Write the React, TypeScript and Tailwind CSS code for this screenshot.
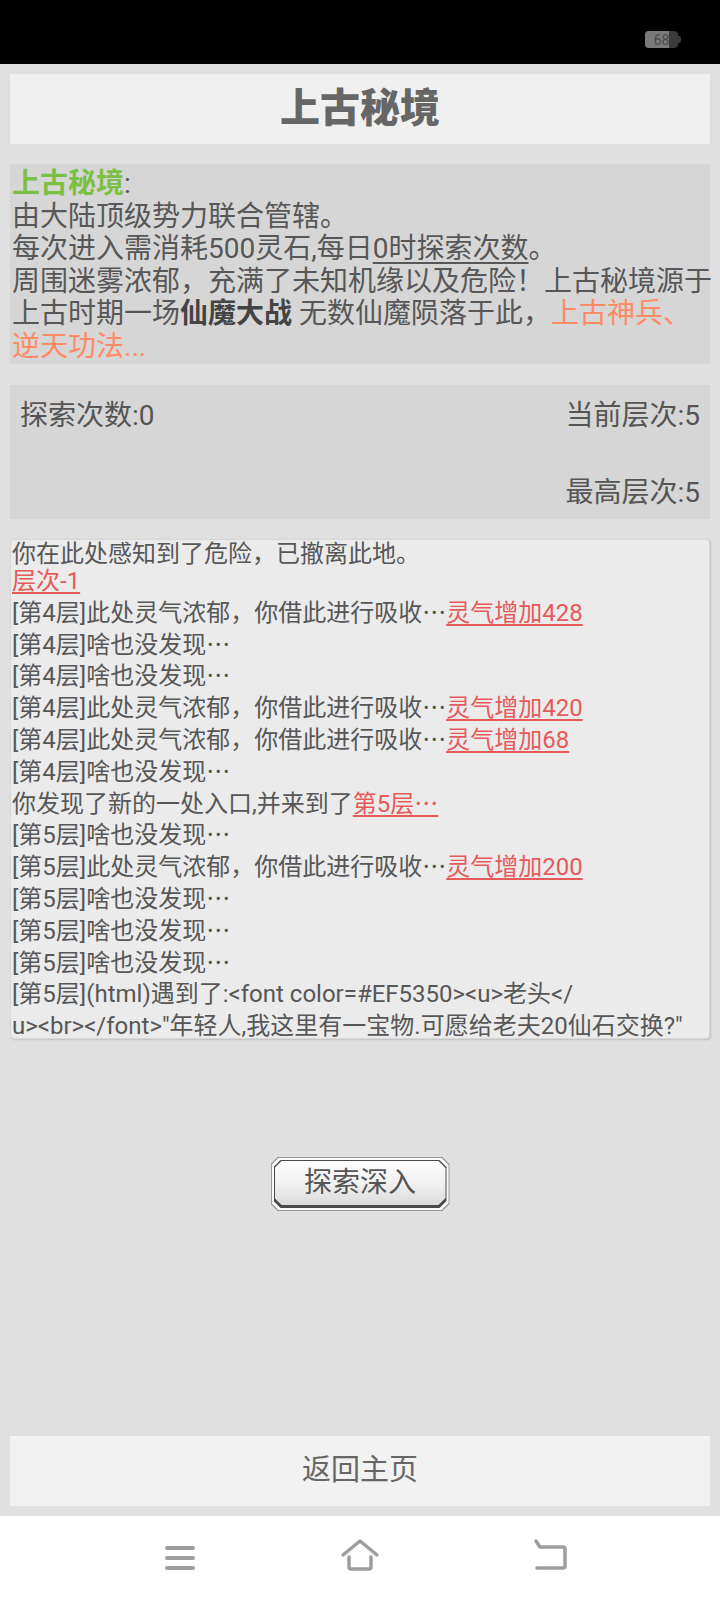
import React from "react";

const FONT = "font-['Roboto','Noto_Sans_CJK_SC',sans-serif]";

type Part = { t: string; red?: boolean };

const logLines: Part[][] = [
  [{ t: "层次-1", red: true }],
  [{ t: "[第4层]此处灵气浓郁，你借此进行吸收…" }, { t: "灵气增加428", red: true }],
  [{ t: "[第4层]啥也没发现…" }],
  [{ t: "[第4层]啥也没发现…" }],
  [{ t: "[第4层]此处灵气浓郁，你借此进行吸收…" }, { t: "灵气增加420", red: true }],
  [{ t: "[第4层]此处灵气浓郁，你借此进行吸收…" }, { t: "灵气增加68", red: true }],
  [{ t: "[第4层]啥也没发现…" }],
  [{ t: "你发现了新的一处入口,并来到了" }, { t: "第5层…", red: true }],
  [{ t: "[第5层]啥也没发现…" }],
  [{ t: "[第5层]此处灵气浓郁，你借此进行吸收…" }, { t: "灵气增加200", red: true }],
  [{ t: "[第5层]啥也没发现…" }],
  [{ t: "[第5层]啥也没发现…" }],
  [{ t: "[第5层]啥也没发现…" }],
  [{ t: "[第5层](html)遇到了:<font color=#EF5350><u>老头</" }],
  [{ t: 'u><br></font>"年轻人,我这里有一宝物.可愿给老夫20仙石交换?"' }],
];

// the ellipsis on the device comes from the CJK font, full width
function withEllipsis(text: string) {
  const bits = text.split("…");
  return bits.map((b, i) => (
    <React.Fragment key={i}>
      {b}
      {i < bits.length - 1 && (
        <span className="font-['Noto_Sans_CJK_SC',sans-serif] leading-none">…</span>
      )}
    </React.Fragment>
  ));
}

function Battery() {
  return (
    <div className="flex items-center">
      <div className="relative w-[33px] h-[17px] rounded-[4px] bg-[#3a3a3a] overflow-hidden">
        <div className="absolute left-0 top-0 h-full w-[24px] bg-[#7a7a7a]" />
        <span className="absolute inset-0 flex items-center justify-center text-[14px] leading-none text-[#4a4a4a] font-['Roboto',sans-serif]">
          68
        </span>
      </div>
      <div className="w-[3px] h-[7px] rounded-r-[2px] bg-[#3a3a3a]" />
    </div>
  );
}

function ExploreButton() {
  const cut = "[clip-path:polygon(7px_0,calc(100%-7px)_0,100%_7px,100%_calc(100%-7px),calc(100%-7px)_100%,7px_100%,0_calc(100%-7px),0_7px)]";
  return (
    <div className={`w-[179px] h-[54px] bg-[#9a9a9a] p-[1px] ${cut}`}>
      <div className={`w-full h-full bg-[#fafafa] p-[2px] ${cut}`}>
        <div className={`w-full h-full bg-[#4a4a4a] pt-[1px] px-[1px] pb-[3px] ${cut}`}>
          <div
            className={`w-full h-full flex items-center justify-center bg-gradient-to-b from-[#fdfdfd] via-[#f1f1f1] to-[#dcdcdc] text-[28px] text-[#555] ${cut}`}
          >
            探索深入
          </div>
        </div>
      </div>
    </div>
  );
}

export default function App() {
  return (
    <div className={`w-[720px] h-[1600px] flex flex-col bg-[#e0e0e0] ${FONT}`}>
      {/* status bar */}
      <div className="h-[64px] bg-black flex items-start justify-end pt-[31px] pr-[39px]">
        <Battery />
      </div>

      <div className="flex-1 flex flex-col px-[10px]">
        {/* title */}
        <div className="mt-[10px] h-[70px] bg-[#f0f0f0] flex items-center justify-center">
          <h1 className="text-[40px] font-black text-[#666]">上古秘境</h1>
        </div>

        {/* description */}
        <div className="mt-[20px] h-[200px] bg-[#d6d6d6] pl-[2px] pt-[4px] text-[28px] leading-[32.5px] text-[#575757] whitespace-nowrap">
          <div>
            <span className="font-bold text-[#7cc043]">上古秘境</span>:
          </div>
          <div>由大陆顶级势力联合管辖。</div>
          <div>
            每次进入需消耗500灵石,每日<span className="underline underline-offset-4">0时探索次数</span>。
          </div>
          <div>周围迷雾浓郁，充满了未知机缘以及危险！上古秘境源于</div>
          <div>
            上古时期一场<span className="font-bold text-[#444]">仙魔大战</span> 无数仙魔陨落于此，
            <span className="text-[#ff8a65]">上古神兵、</span>
          </div>
          <div className="text-[#ff8a65]">逆天功法...</div>
        </div>

        {/* stats */}
        <div className="mt-[21px] h-[134px] bg-[#d6d6d6] px-[10px] pt-[15px] flex flex-col text-[28px] leading-[32px] text-[#555]">
          <div className="flex justify-between">
            <span>探索次数:0</span>
            <span>当前层次:5</span>
          </div>
          <div className="flex justify-end mt-[45px]">
            <span>最高层次:5</span>
          </div>
        </div>

        {/* log */}
        <div className="mt-[20px] h-[500px] rounded-[4px] bg-[#ebebeb] border border-[#d8d8d8] shadow-[1px_1px_2px_rgba(0,0,0,0.15)] pl-[1px] text-[24px] text-[#575757] whitespace-nowrap">
          <div className="mt-[2px] leading-[24px]">你在此处感知到了危险，已撤离此地。</div>
          {logLines.map((line, i) => (
            <div key={i} className="h-[31.8px] leading-[31.8px]">
              {line.map((p, j) =>
                p.red ? (
                  <span key={j} className="text-[#e65a5a] underline underline-offset-[3px]">
                    {withEllipsis(p.t)}
                  </span>
                ) : (
                  <span key={j}>{withEllipsis(p.t)}</span>
                )
              )}
            </div>
          ))}
        </div>

        {/* explore button */}
        <div className="mt-[118px] flex justify-center">
          <ExploreButton />
        </div>

        {/* back home */}
        <div className="mt-auto mb-[10px] h-[70px] bg-[#f2f2f2] flex items-center justify-center text-[29px] text-[#666]">
          返回主页
        </div>
      </div>

      {/* nav bar */}
      <div className="h-[84px] bg-white pt-[22px]">
        <div className="w-[720px] relative h-[40px]">
          <svg className="absolute left-[160px] top-0" width="40" height="40" viewBox="0 0 40 40">
            <g stroke="#9e9e9e" strokeWidth="4" strokeLinecap="round">
              <line x1="7" y1="10" x2="33" y2="10" />
              <line x1="7" y1="20" x2="33" y2="20" />
              <line x1="7" y1="30" x2="33" y2="30" />
            </g>
          </svg>
          <svg className="absolute left-[340px] top-0" width="40" height="40" viewBox="0 0 40 40">
            <path
              d="M3 17 L20 3 L37 17 M9 19 L9 29 Q9 31 11 31 L29 31 Q31 31 31 29 L31 19"
              fill="none"
              stroke="#9e9e9e"
              strokeWidth="3.5"
              strokeLinecap="round"
              strokeLinejoin="round"
            />
          </svg>
          <svg className="absolute left-[530px] top-0" width="40" height="40" viewBox="0 0 40 40">
            <path
              d="M6 3 L10 9 L33 9 Q35 9 35 11 L35 28 Q35 30 33 30 L7 30"
              fill="none"
              stroke="#9e9e9e"
              strokeWidth="3.5"
              strokeLinecap="round"
              strokeLinejoin="round"
            />
          </svg>
        </div>
      </div>
    </div>
  );
}
